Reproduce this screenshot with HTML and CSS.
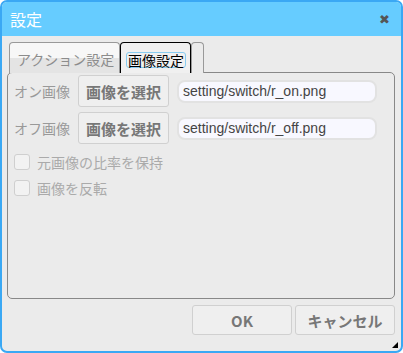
FILE: index.html
```html
<!DOCTYPE html>
<html>
<head>
  <title>設定</title>
  <link rel="stylesheet" href="styles.css">
</head>
<body>
  <div class="dialog">
    <div class="titlebar">
      <span class="title">設定</span>
      <span class="close">&#x2716;</span>
    </div>

    <div class="tabs">
      <div class="tab">アクション設定</div>
      <div class="tab active"><span class="focus">画像設定</span></div>
      <div class="tab empty"></div>
    </div>

    <div class="panel">
      <div class="row">
        <span class="label">オン画像</span>
        <button class="btn pick">画像を選択</button>
        <input class="path" type="text" value="setting/switch/r_on.png">
      </div>
      <div class="row">
        <span class="label">オフ画像</span>
        <button class="btn pick">画像を選択</button>
        <input class="path" type="text" value="setting/switch/r_off.png">
      </div>
      <label class="check"><span class="box"></span>元画像の比率を保持</label>
      <label class="check"><span class="box"></span>画像を反転</label>
    </div>

    <div class="actions">
      <button class="btn action">OK</button>
      <button class="btn action">キャンセル</button>
    </div>

    <div class="grip"></div>
  </div>
</body>
</html>
```

FILE: styles.css
```css
body {
  margin: 0;
  font-family: "Noto Sans CJK JP", "Noto Sans", sans-serif;
}

.dialog {
  position: relative;
  width: 403px;
  height: 353px;
  box-sizing: border-box;
  border: 2px solid #3aa8f4;
  border-radius: 7px;
  background: #ebebeb;
  overflow: hidden;
}

.titlebar {
  height: 34px;
  background: #66ccff;
  display: flex;
  align-items: center;
  justify-content: space-between;
  padding: 0 11px 0 8px;
}

.title {
  color: #fff;
  font-size: 16px;
}

.close {
  color: #555;
  font-size: 13px;
  font-family: "DejaVu Sans", sans-serif;
}

.tabs {
  display: flex;
  margin: 6px 0 0 7px;
  height: 30px;
}

.tab {
  box-sizing: border-box;
  height: 31px;
  border: 1px solid #999;
  border-bottom: none;
  border-radius: 4px 4px 0 0;
  background: linear-gradient(#f7f7f7 0, #f7f7f7 50%, #e4e4e4 50%, #e4e4e4 100%);
  color: #8c8c8c;
  font-size: 14px;
  white-space: nowrap;
  padding: 6px 0 0 7px;
  width: 111px;
}

.tab.active {
  width: 71px;
  border-color: #000;
  background: #f0f0f0;
  color: #000;
  padding: 7px 0 0 5px;
  position: relative;
  z-index: 1;
}

.focus {
  border: 1px solid #88ccf0;
  border-radius: 3px;
  padding: 0 1px;
  line-height: 14px;
  display: inline-block;
}

.tab.empty {
  width: 13px;
  padding: 0;
  background: #ebebeb;
}

.panel {
  box-sizing: border-box;
  margin: 0 6px 0 5px;
  height: 227px;
  border: 1px solid #888;
  border-radius: 5px;
  padding: 2px 6px;
}

.row {
  display: flex;
  align-items: center;
  margin-bottom: 5px;
}

.label {
  color: #999;
  font-size: 14px;
  width: 64px;
}

.btn {
  font-family: "Noto Sans CJK JP", "Noto Sans", sans-serif;
  font-weight: bold;
  color: #777;
  background: #efefef;
  border: 1px solid #d0d0d0;
  border-radius: 3px;
  cursor: pointer;
}

.pick {
  width: 91px;
  height: 32px;
  font-size: 15px;
  padding: 0;
}

.path {
  margin-left: 8px;
  width: 200px;
  height: 23px;
  box-sizing: border-box;
  border: 2px solid #e2e2e2;
  border-radius: 8px;
  background: #f8f8ff;
  font-family: "Liberation Sans", Arial, sans-serif;
  font-size: 14px;
  color: #444;
  padding: 0 0 0 4px;
}

.check {
  display: flex;
  align-items: center;
  color: #aaa;
  font-size: 14px;
  height: 25px;
  margin-top: 1px;
}

.box {
  width: 14px;
  height: 14px;
  border: 1px solid #cfcfcf;
  border-radius: 3px;
  background: #f2f2f2;
  margin-right: 7px;
}

.actions {
  display: flex;
  justify-content: flex-end;
  gap: 3px;
  margin: 6px 6px 0 0;
}

.action {
  width: 100px;
  height: 30px;
  font-size: 15px;
  padding: 0;
}

.grip {
  position: absolute;
  right: 3px;
  bottom: 3px;
  width: 0;
  height: 0;
  border-left: 6px solid transparent;
  border-bottom: 6px solid #000;
}
```
